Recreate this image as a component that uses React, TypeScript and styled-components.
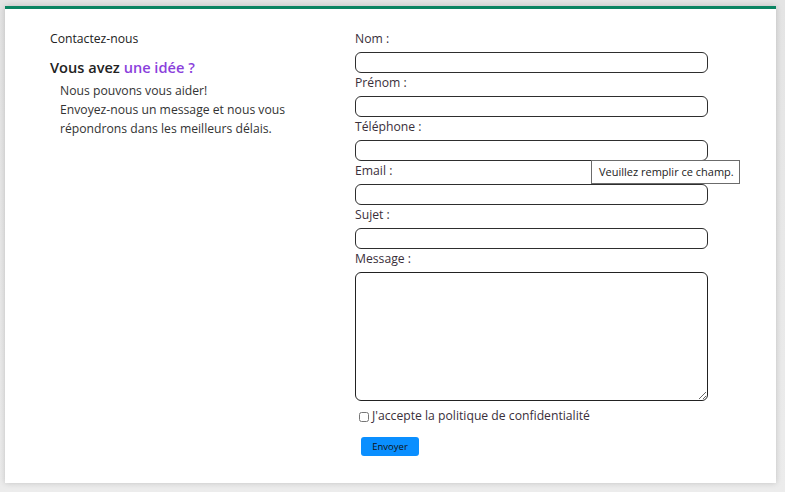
import React from "react";
import styled, { createGlobalStyle } from "styled-components";

const Global = createGlobalStyle`
  html, body { margin: 0; padding: 0; }
  body {
    background: #e9e9e9;
    font-family: "Open Sans", "Noto Sans", sans-serif;
    color: #333;
  }
  * { box-sizing: border-box; }
`;

const Page = styled.div`
  width: 785px;
  height: 492px;
  padding: 6px 9px 9px 5px;
  background: linear-gradient(#e4e4e4, #ececec);
`;

const Card = styled.div`
  height: 100%;
  background: #fff;
  border-top: 3px solid #0b8462;
  box-shadow: 0 0 6px rgba(0, 0, 0, 0.18);
  display: flex;
  padding: 20px 0 0 45px;
`;

const Intro = styled.div`
  width: 305px;
  display: flex;
  flex-direction: column;
`;

const Kicker = styled.div`
  font-size: 12.2px;
  line-height: 19px;
  color: #222;
`;

const Heading = styled.h2`
  margin: 9px 0 0;
  font-size: 14.6px;
  line-height: 20px;
  font-weight: 600;
  color: #222;
`;

const Accent = styled.span`
  color: #8b3fdc;
`;

const Lead = styled.p`
  margin: 4px 0 0;
  padding-left: 10px;
  font-size: 12.2px;
  line-height: 19px;
  color: #333;
`;

const Form = styled.form`
  position: relative;
  width: 353px;
  display: flex;
  flex-direction: column;
`;

const Label = styled.label`
  display: block;
  font-size: 12.2px;
  line-height: 19px;
  height: 19px;
  margin-bottom: 4px;
  color: #3a2f3a;
`;

const Input = styled.input`
  display: block;
  width: 353px;
  height: 21px;
  border: 1px solid #2e2e2e;
  border-radius: 6px;
  background: #fff;
  padding: 0 6px;
  font: inherit;
  outline: none;
`;

const TextArea = styled.textarea`
  display: block;
  width: 353px;
  height: 129px;
  border: 1px solid #222;
  border-radius: 6px;
  background: #fff;
  font: inherit;
  resize: vertical;
  outline: none;
`;

const CheckRow = styled.label`
  display: flex;
  align-items: center;
  gap: 3px;
  margin: 5px 0 0 4px;
  font-size: 12.2px;
  line-height: 20px;
  color: #3a2f3a;
`;

const Check = styled.input`
  width: 10px;
  height: 10px;
  margin: 1px 0 0 0;
`;

const Button = styled.button`
  align-self: flex-start;
  margin: 11px 0 0 6px;
  width: 58px;
  height: 19px;
  border: none;
  border-radius: 3px;
  background: #0a8fff;
  color: #111;
  font-family: "Open Sans", sans-serif;
  font-size: 9.5px;
  padding: 0;
  cursor: pointer;
`;

const Tooltip = styled.div`
  position: absolute;
  left: 236px;
  top: 131px;
  width: 149px;
  height: 24px;
  background: #fff;
  border: 1px solid #6b6b6b;
  font-size: 11px;
  line-height: 22px;
  padding-left: 7px;
  color: #222;
  white-space: nowrap;
`;

const fields = [
  { id: "nom", label: "Nom :" },
  { id: "prenom", label: "Prénom :" },
  { id: "tel", label: "Téléphone :" },
  { id: "email", label: "Email :" },
  { id: "sujet", label: "Sujet :" },
];

export default function App() {
  return (
    <>
      <Global />
      <Page>
        <Card>
          <Intro>
            <Kicker>Contactez-nous</Kicker>
            <Heading>
              Vous avez <Accent>une idée ?</Accent>
            </Heading>
            <Lead>
              Nous pouvons vous aider!
              <br />
              Envoyez-nous un message et nous vous
              <br />
              répondrons dans les meilleurs délais.
            </Lead>
          </Intro>
          <Form onSubmit={(e) => e.preventDefault()}>
            {fields.map((f) => (
              <React.Fragment key={f.id}>
                <Label htmlFor={f.id}>{f.label}</Label>
                <Input id={f.id} />
              </React.Fragment>
            ))}
            <Label htmlFor="msg">Message :</Label>
            <TextArea id="msg" />
            <CheckRow>
              <Check type="checkbox" />
              J'accepte la politique de confidentialité
            </CheckRow>
            <Button type="submit">Envoyer</Button>
            <Tooltip>Veuillez remplir ce champ.</Tooltip>
          </Form>
        </Card>
      </Page>
    </>
  );
}
